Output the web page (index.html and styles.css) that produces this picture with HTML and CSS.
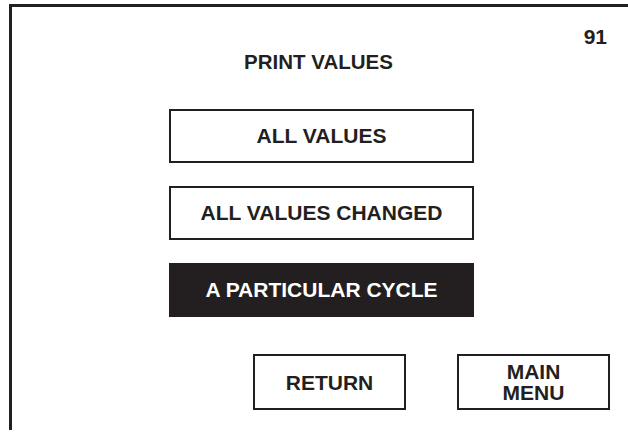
FILE: index.html
```html
<!DOCTYPE html>
<html lang="en">
<head>
  <meta charset="UTF-8">
  <meta name="viewport" content="width=device-width, initial-scale=1.0">
  <title>Print Values</title>
  <link rel="stylesheet" href="styles.css">
</head>
<body>

<div class="frame">
  <div class="page-num">91</div>

  <div class="menu">
    <h1 class="title">PRINT VALUES</h1>
    <button class="option">ALL VALUES</button>
    <button class="option">ALL VALUES CHANGED</button>
    <button class="option selected">A PARTICULAR CYCLE</button>
  </div>

  <div class="nav">
    <button class="nav-btn">RETURN</button>
    <button class="nav-btn">MAIN<br>MENU</button>
  </div>
</div>

</body>
</html>
```

FILE: styles.css
```css
html, body {
  margin: 0;
  height: 100%;
  overflow: hidden;
  background-color: #ffffff;
}
body {
  font-family: "Liberation Sans", Arial, sans-serif;
  font-weight: bold;
  color: #231f20;
}
.frame {
  margin: 4px 0 0 9px;
  height: calc(100vh - 7px);
  border-left: 3px solid #231f20;
  border-top: 3px solid #231f20;
  padding-top: 18px;
  box-sizing: border-box;
}
.page-num {
  font-size: 21px;
  line-height: 24px;
  text-align: right;
  padding-right: 21px;
}
.menu {
  margin-left: 157px;
  width: 305px;
  display: flex;
  flex-direction: column;
  gap: 23px;
}
.title {
  margin: 1px 0 12px 0;
  font-size: 20.5px;
  line-height: 24px;
  text-align: center;
  margin-right: 6px;
}
button {
  font-family: "Liberation Sans", Arial, sans-serif;
  font-weight: bold;
  font-size: 21px;
  color: #231f20;
  background-color: #ffffff;
  border: 2px solid #231f20;
  border-radius: 0;
  padding: 0;
  margin: 0;
  box-sizing: border-box;
}
.option {
  height: 54px;
  width: 100%;
}
.option.selected {
  background-color: #231f20;
  color: #ffffff;
}
.nav {
  display: flex;
  gap: 51px;
  margin: 37px 0 0 241px;
}
.nav-btn {
  width: 153px;
  height: 56px;
  line-height: 21px;
}
```
